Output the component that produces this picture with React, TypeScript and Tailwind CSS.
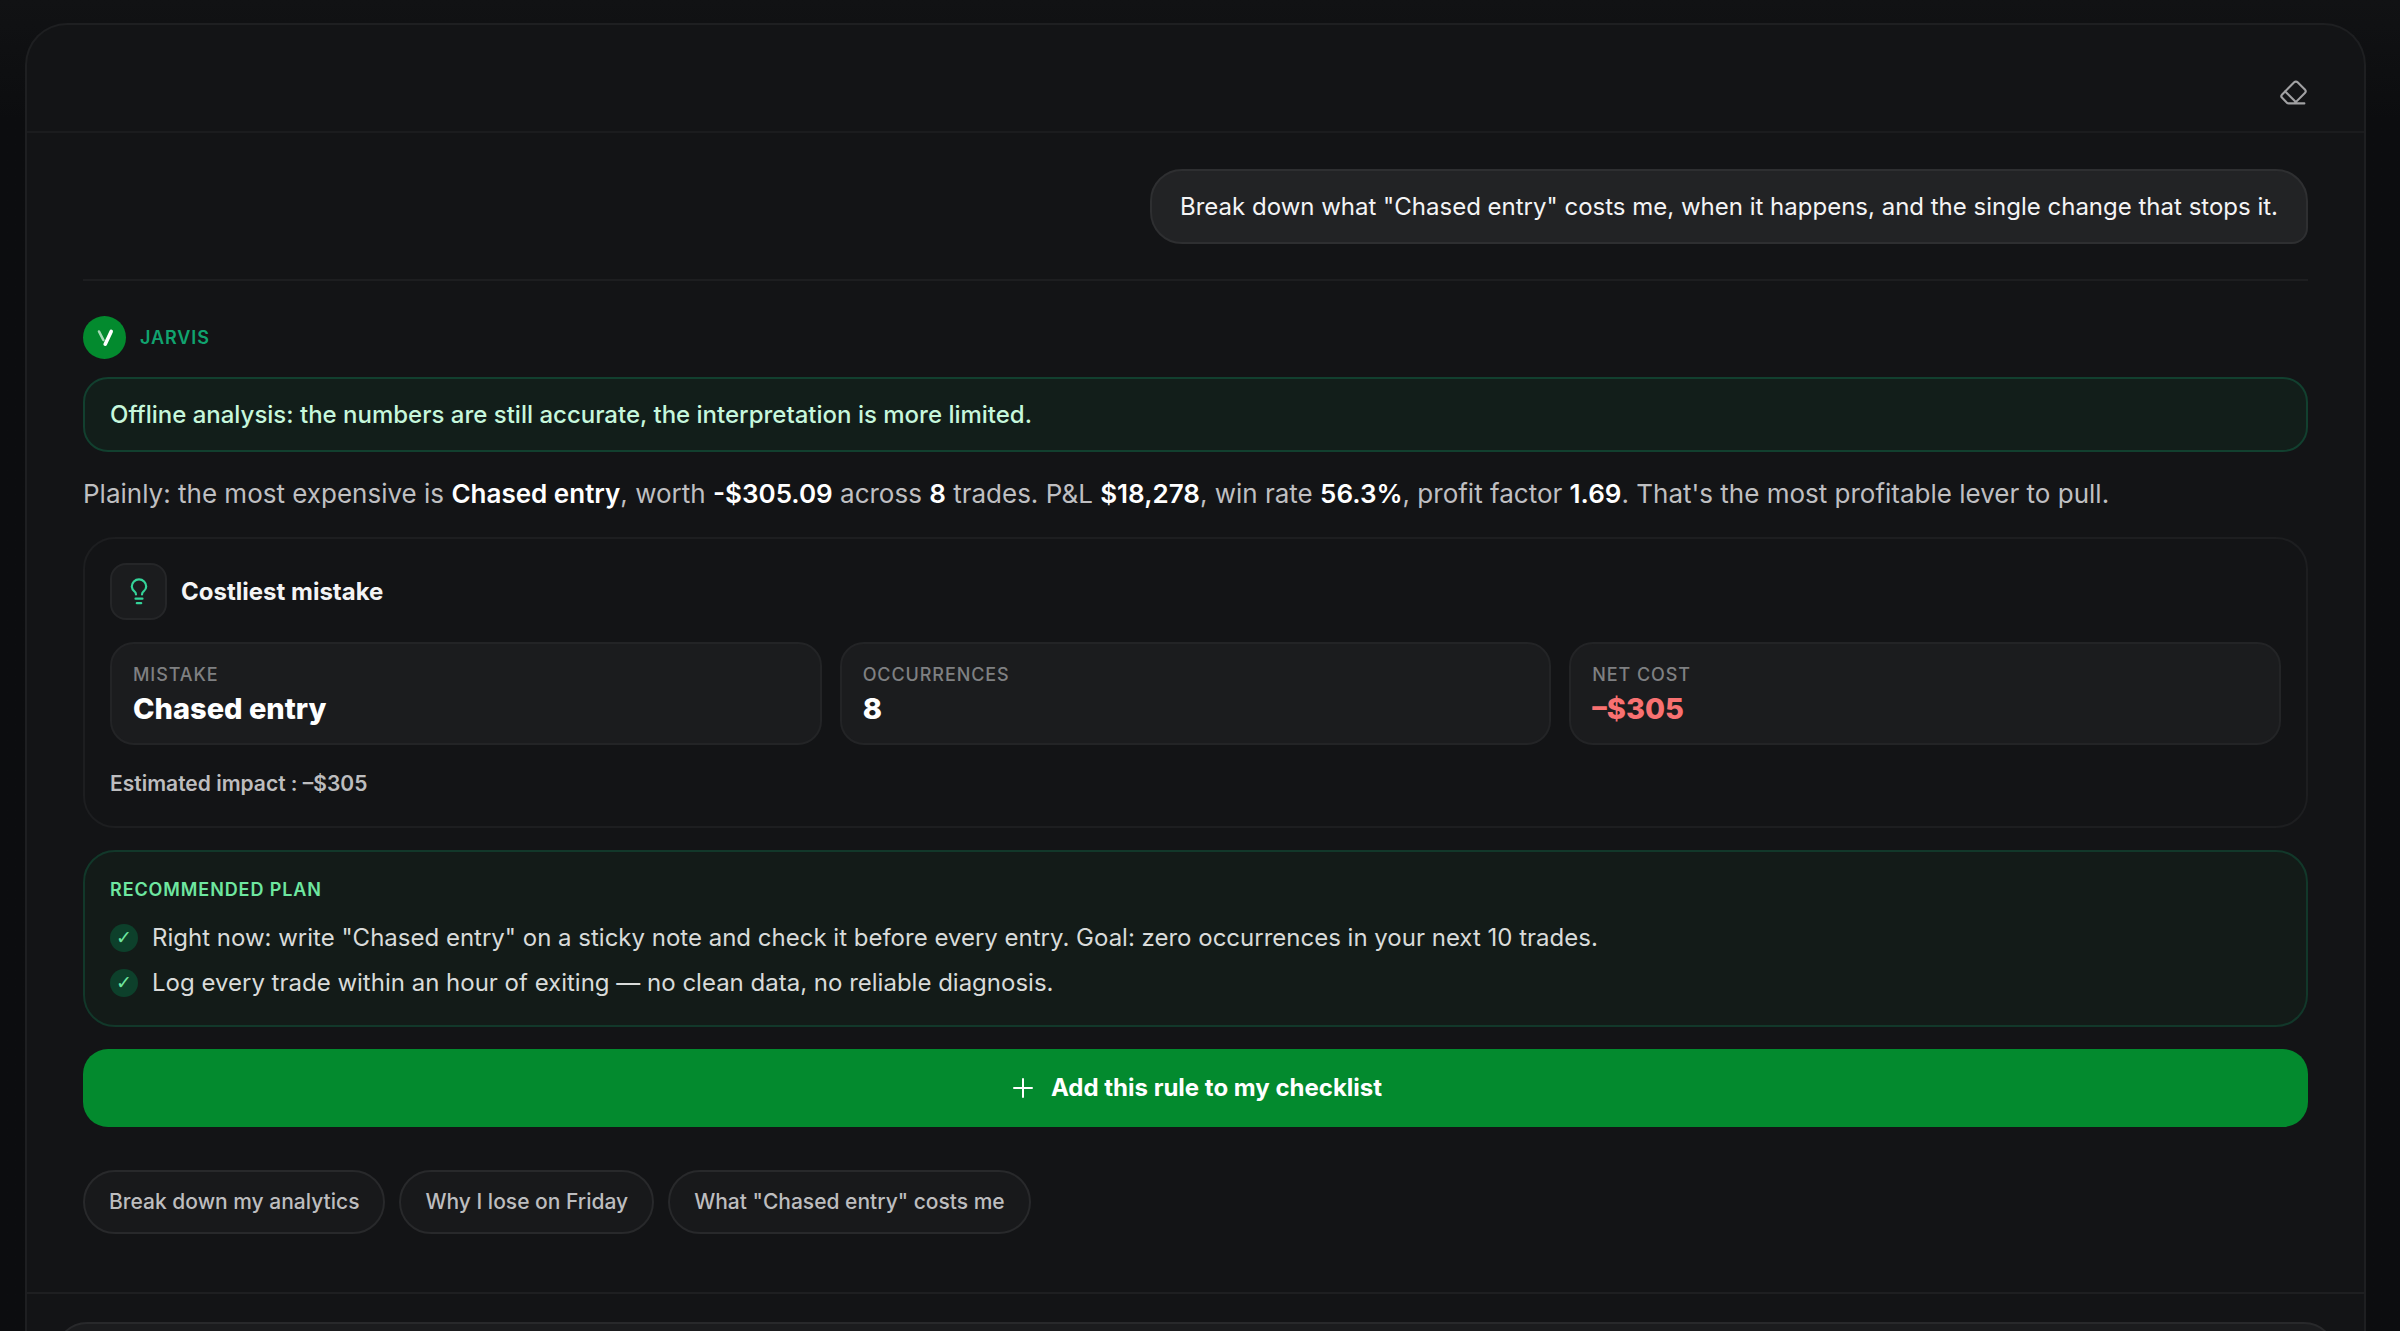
import { Eraser } from "lucide-react";
import type { ReactNode } from "react";

type Stat = { label: string; value: string; negative?: boolean };

const stats: Stat[] = [
  { label: "Mistake", value: "Chased entry" },
  { label: "Occurrences", value: "8" },
  { label: "Net cost", value: "–$305", negative: true },
];

const plan = [
  'Right now: write "Chased entry" on a sticky note and check it before every entry. Goal: zero occurrences in your next 10 trades.',
  "Log every trade within an hour of exiting — no clean data, no reliable diagnosis.",
];

const suggestions = [
  "Break down my analytics",
  "Why I lose on Friday",
  'What "Chased entry" costs me',
];

function Strong({ children }: { children: ReactNode }) {
  return <strong className="font-semibold text-white">{children}</strong>;
}

function JarvisAvatar() {
  return (
    <span className="flex size-[43px] shrink-0 items-center justify-center rounded-full bg-[#038a2e]">
      <svg viewBox="0 0 20 20" className="size-5" fill="none" strokeLinecap="round" aria-hidden="true">
        <path d="M4 3.5 8.4 12" stroke="#a5dab5" strokeWidth="2.6" />
        <path d="M16.2 3.4 10.2 16.2" stroke="#fff" strokeWidth="3.6" />
      </svg>
    </span>
  );
}

function BulbIcon() {
  return (
    <svg
      viewBox="0 0 28 28"
      className="size-7 text-[#34d399]"
      fill="none"
      stroke="currentColor"
      strokeWidth="2.2"
      strokeLinecap="round"
      strokeLinejoin="round"
      aria-hidden="true"
    >
      <path d="M11 16.500c0-1.400-.6-2.400-1.800-3.300A7.200 7.200 0 0 1 6.800 8.600a7.200 7.200 0 0 1 14.400 0c0 1.900-.9 3.400-2.400 4.600-1.200.9-1.800 1.900-1.800 3.300" />
      <path d="M10.500 20.700h7" />
      <path d="M11.800 25.200h4.400" />
    </svg>
  );
}

function StatTile({ label, value, negative }: Stat) {
  return (
    <div className="rounded-3xl border-2 border-[#232426] bg-[#1b1c1e] px-[21px] pt-[18px] pb-[13px]">
      <dt className="text-[18px] leading-[26px] font-medium tracking-wider text-[#7f8082] uppercase">{label}</dt>
      <dd className={`text-[29px] leading-[42px] font-extrabold ${negative ? "text-[#f87171]" : "text-white"}`}>
        {value}
      </dd>
    </div>
  );
}

function MistakeCard() {
  return (
    <section className="rounded-[32px] border-2 border-[#1d1e20] px-[25px] pt-[24px] pb-[26px]">
      <div className="flex items-center gap-[14px]">
        <span className="flex size-[57px] items-center justify-center rounded-2xl border-2 border-[#252628] bg-[#1b1c1e]">
          <BulbIcon />
        </span>
        <h2 className="text-[24px] leading-9 font-bold text-[#f4f4f5]">Costliest mistake</h2>
      </div>
      <dl className="mt-[22px] grid grid-cols-3 gap-[18px]">
        {stats.map((stat) => (
          <StatTile key={stat.label} {...stat} />
        ))}
      </dl>
      <p className="mt-[23px] text-[21px] leading-8 font-semibold text-[#bdbdbf]">Estimated impact : –$305</p>
    </section>
  );
}

function PlanCard() {
  return (
    <section className="rounded-[32px] border-2 border-[#12382a] bg-[#131b18] px-[25px] pt-[25px] pb-[20px]">
      <h2 className="text-[18px] leading-[26px] font-semibold tracking-wider text-[#6ee7a0] uppercase">
        Recommended plan
      </h2>
      <ul className="mt-[12px]">
        {plan.map((step) => (
          <li key={step} className="flex items-center gap-[14px] text-[24px] leading-[45px] text-[#d9dbda]">
            <span className="flex size-7 shrink-0 items-center justify-center rounded-full bg-[#0d402b] font-['DejaVu_Sans',sans-serif] text-[19px] leading-none font-bold text-[#6ee7a0]">
              ✓
            </span>
            {step}
          </li>
        ))}
      </ul>
    </section>
  );
}

export default function App() {
  return (
    <div className="h-screen overflow-hidden bg-[#0c0d0f] bg-linear-to-b from-[#111214] to-[#0c0d0f] to-[120px] pt-[23px] pr-[34px] pl-[25px] font-[Inter,sans-serif] text-white">
      <main className="rounded-t-[42px] border-2 border-b-0 border-[#1e1f21] bg-[#131416]">
        <header className="flex h-[108px] items-end justify-end border-b-2 border-[#1b1c1e] px-[56px] pb-[24px]">
          <button type="button" aria-label="Clear conversation" className="text-[#a1a1a3]">
            <Eraser className="size-[29px]" strokeWidth={1.75} />
          </button>
        </header>

        <div className="px-[56px] pt-[36px] pb-[58px]">
          <div className="flex justify-end border-b-2 border-[#1d1e20] pb-[35px]">
            <p className="rounded-[32px] rounded-br-2xl border-2 border-[#2e2f31] bg-[#222325] px-[28px] py-[16px] text-[24px] leading-[39px] text-[#f4f4f5]">
              Break down what "Chased entry" costs me, when it happens, and the single change that stops it.
            </p>
          </div>

          <div className="mt-[35px] flex items-center gap-[14px]">
            <JarvisAvatar />
            <span className="text-[18px] leading-[26px] font-semibold tracking-wider text-[#10a36f] uppercase">Jarvis</span>
          </div>

          <p className="mt-[18px] rounded-[25px] border-2 border-[#12402f] bg-[#121e1a] px-[25px] py-[16px] text-[24px] leading-[39px] font-medium text-[#c6f7dc]">
            Offline analysis: the numbers are still accurate, the interpretation is more limited.
          </p>

          <p className="mt-[19px] text-[26px] leading-[46px] text-[#bfbfc1]">
            Plainly: the most expensive is <Strong>Chased entry</Strong>, worth <Strong>-$305.09</Strong> across{" "}
            <Strong>8</Strong> trades. P&L <Strong>$18,278</Strong>, win rate <Strong>56.3%</Strong>, profit factor{" "}
            <Strong>1.69</Strong>. That's the most profitable lever to pull.
          </p>

          <div className="mt-[20px] flex flex-col gap-[22px]">
            <MistakeCard />
            <PlanCard />
            <button
              type="button"
              className="flex h-[78px] items-center justify-center gap-[14px] rounded-[25px] bg-[#038a2e] text-[24px] font-bold"
            >
              <svg viewBox="0 0 28 28" className="size-7" stroke="currentColor" strokeWidth="2" strokeLinecap="round" aria-hidden="true">
                <path d="M5 14h18M14 5v18" />
              </svg>
              Add this rule to my checklist
            </button>
          </div>

          <div className="mt-[43px] flex flex-wrap gap-[14px]">
            {suggestions.map((text) => (
              <button
                key={text}
                type="button"
                className="h-16 rounded-full border-2 border-[#28292b] bg-[#18191b] px-6 text-[21px] font-medium text-[#bdbdbf]"
              >
                {text}
              </button>
            ))}
          </div>
        </div>

        <footer className="border-t-2 border-[#1e1f21] px-7 pt-7">
          <textarea
            aria-label="Message Jarvis"
            className="block h-28 w-full resize-none rounded-[32px] border-2 border-[#28292b] bg-[#1b1c1e] px-7 py-5 text-[24px]"
          />
        </footer>
      </main>
    </div>
  );
}
